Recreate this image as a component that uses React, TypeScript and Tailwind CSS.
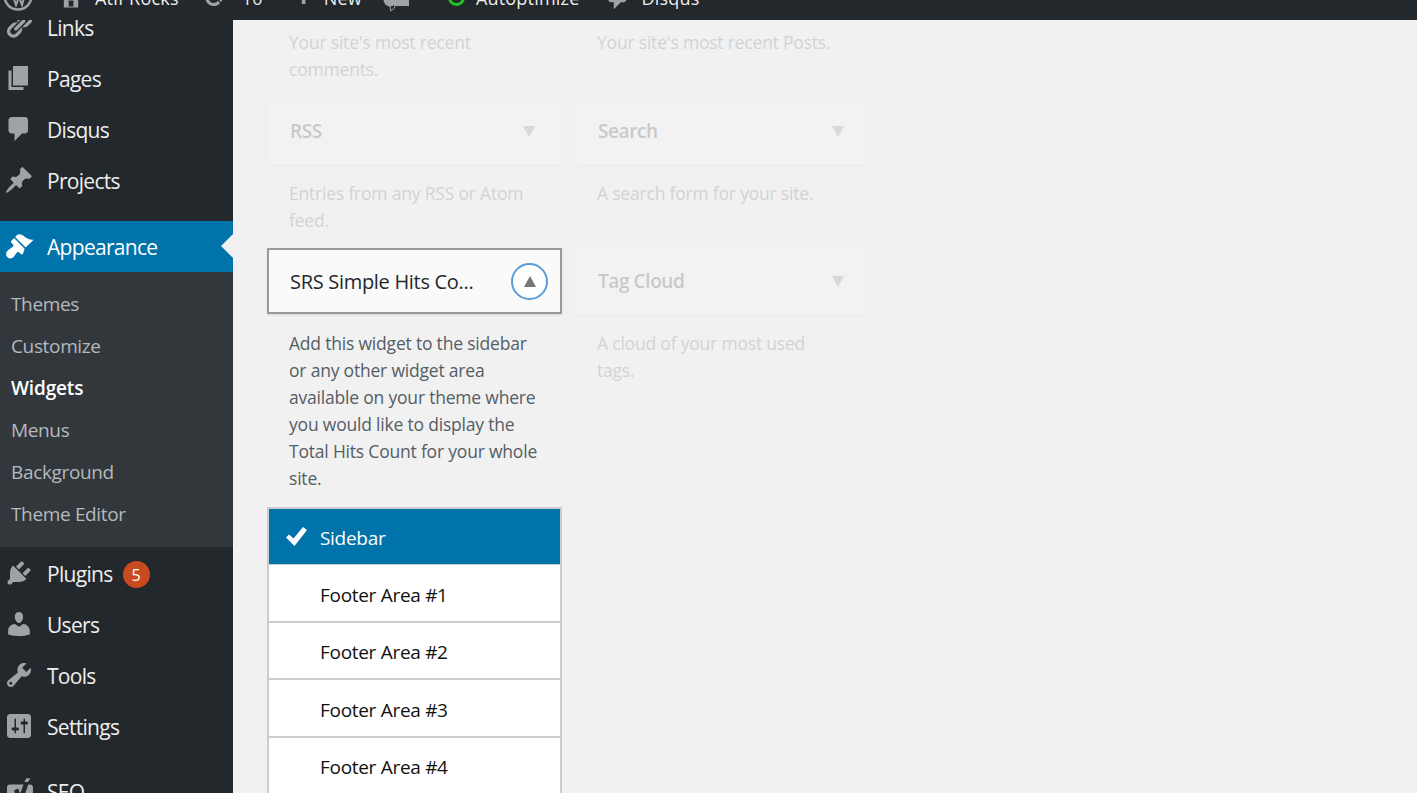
import React from "react";

const font = "font-['Open_Sans','Noto_Sans',sans-serif]";

const icons: any = {
  links:
    "M17.74 2.76c1.68 1.69 1.68 4.41 0 6.1l-1.53 1.52c-1.12 1.12-2.7 1.47-4.14 1.09l2.62-2.61.76-.77.76-.76c.84-.84.84-2.2 0-3.04-.84-.85-2.2-.85-3.04 0l-.77.76-3.38 3.38c-.37-1.44-.02-3.02 1.1-4.14l1.52-1.53c1.69-1.68 4.42-1.68 6.1 0zM8.59 13.43l5.34-5.34c.42-.42.42-1.1 0-1.52-.44-.43-1.13-.39-1.53 0l-5.33 5.34c-.42.42-.42 1.1 0 1.52.44.43 1.13.39 1.52 0zm-.76 2.29l4.14-4.15c.38 1.44.03 3.02-1.09 4.14l-1.52 1.53c-1.69 1.68-4.41 1.68-6.1 0-1.68-1.68-1.68-4.42 0-6.1l1.53-1.52c1.12-1.12 2.7-1.47 4.14-1.1l-4.14 4.15c-.85.84-.85 2.2 0 3.05.84.84 2.2.84 3.04 0z",
  pages: "M6 15V2h10v13H6zm-1 1h8v2H3V5h2v11z",
  comments:
    "M5 2h9c1.1 0 2 .9 2 2v7c0 1.1-.9 2-2 2h-2l-5 5v-5H5c-1.1 0-2-.9-2-2V4c0-1.1.9-2 2-2z",
  pin: "M10.44 3.02l1.82-1.82 6.36 6.35-1.83 1.82c-1.05-.68-2.48-.57-3.41.36l-.75.75c-.92.93-1.04 2.35-.35 3.41l-1.83 1.82-2.41-2.41-2.8 2.79c-.42.42-3.38 2.71-3.8 2.29s1.86-3.39 2.28-3.81l2.79-2.79L4.1 9.36l1.83-1.82c1.05.69 2.48.57 3.4-.36l.75-.75c.93-.92 1.05-2.35.36-3.41z",
  brush:
    "M14.48 11.06L7.41 3.99l1.5-1.5c.5-.56 2.3-.47 3.51.32 1.21.8 1.43 1.28 2.91 2.1 1.18.64 2.45 1.26 4.45.85zm-.71.71L6.7 4.7 4.93 6.47c-.39.39-.39 1.02 0 1.41l1.06 1.06c.39.39.39 1.03 0 1.42-.6.6-1.43 1.11-2.21 1.69-.35.26-.7.53-1.01.84C1.43 13.71.96 15.65 2 17.18c1.04 1.53 3.15 1.41 4.19.37.31-.31.58-.66.84-1.01.58-.78 1.09-1.61 1.69-2.21.39-.39 1.03-.39 1.42 0l1.06 1.06c.39.39 1.02.39 1.41 0z",
  plugin:
    "M13.11 4.36L9.87 7.6 8 5.73l3.24-3.24c.35-.34 1.05-.2 1.56.32.52.51.66 1.21.31 1.55zm-8 1.77l.91-1.12 9.01 9.01-1.19.84c-.71.71-2.63 1.16-3.82 1.16H6.14L4.9 17.26c-.59.59-1.54.59-2.12 0-.59-.58-.59-1.53 0-2.12l1.24-1.24v-3.88c0-1.13.4-3.19 1.09-3.89zm7.26 3.97l3.24-3.24c.34-.35 1.04-.21 1.55.31.52.51.66 1.21.31 1.55l-3.24 3.25z",
  users:
    "M10 9.25c-2.27 0-2.73-3.44-2.73-3.44C7 4.02 7.82 2 9.97 2c2.16 0 2.98 2.02 2.71 3.81 0 0-.41 3.44-2.68 3.44zm0 2.57L12.72 10c2.39 0 4.52 2.33 4.52 4.53v2.49s-3.65 1.13-7.24 1.13c-3.65 0-7.24-1.13-7.24-1.13v-2.49c0-2.25 1.94-4.48 4.47-4.48z",
  tools:
    "M16.68 9.77c-1.34 1.34-3.3 1.67-4.95.99l-5.41 6.52c-.99.99-2.59.99-3.58 0s-.99-2.59 0-3.57l6.52-5.42c-.68-1.65-.35-3.61.99-4.95 1.28-1.28 3.12-1.62 4.72-1.06l-2.89 2.89 2.82 2.82 2.86-2.87c.53 1.58.18 3.39-1.08 4.65zM3.81 16.21c.4.39 1.04.39 1.43 0 .4-.4.4-1.04 0-1.43-.39-.4-1.03-.4-1.43 0-.39.39-.39 1.03 0 1.43z",
  settings:
    "M18 16V4c0-1.1-.9-2-2-2H4c-1.1 0-2 .9-2 2v12c0 1.1.9 2 2 2h12c1.1 0 2-.9 2-2zM8 11h1c.55 0 1 .45 1 1s-.45 1-1 1H8v1.5c0 .28-.22.5-.5.5s-.5-.22-.5-.5V13H6c-.55 0-1-.45-1-1s.45-1 1-1h1V5.5c0-.28.22-.5.5-.5s.5.22.5.5V11zm5-2h-1c-.55 0-1-.45-1-1s.45-1 1-1h1V5.5c0-.28.22-.5.5-.5s.5.22.5.5V7h1c.55 0 1 .45 1 1s-.45 1-1 1h-1v5.5c0 .28-.22.5-.5.5s-.5-.22-.5-.5V9z",
  home: "M16 8.5l1.53 1.53-1.06 1.06L10 4.62l-6.47 6.47-1.06-1.06L10 2.5l4 4v-2h2v4zm-6-2.46l6 5.99V18H4v-5.97zM12 17v-5H8v5h4z",
  refresh:
    "M10.2 3.28c3.53 0 6.43 2.61 6.92 6h2.08l-3.5 4-3.5-4h2.32c-.45-1.97-2.21-3.45-4.32-3.45-1.45 0-2.73.71-3.54 1.78L4.95 5.66C6.23 4.2 8.11 3.28 10.2 3.28zm-.4 13.44c-3.52 0-6.43-2.61-6.92-6H.8l3.5-4c1.17 1.33 2.33 2.67 3.5 4H5.48c.45 1.97 2.21 3.45 4.32 3.45 1.45 0 2.73-.71 3.54-1.78l1.71 1.95c-1.28 1.46-3.15 2.38-5.25 2.38z",
  plus: "M17 7v3h-5v5H9v-5H4V7h5V2h3v5h5z",
};

const Icon = ({ d, className }: any) => (
  <svg viewBox="0 0 20 20" className={className} fill="currentColor">
    <path d={d} />
  </svg>
);

const SeoIcon = () => (
  <svg viewBox="0 0 20 20" className="mb-[4px] h-[30px] w-[30px] shrink-0 text-[#9ea3a8]" fill="currentColor">
    <rect x="2" y="5.7" width="17.3" height="14" rx="2" />
    <path d="M8 9l3 7 4.5-13" fill="none" stroke="#23282d" strokeWidth="3" />
    <path d="M13.5 4L15 1.5h2.5L16 4z" />
  </svg>
);

const MenuItem = ({ icon, label, badge }: any) => (
  <div className="flex h-[51px] items-center pl-[4px] text-[21px] text-[#eee]">
    {icon === "seo" ? (
      <SeoIcon />
    ) : (
      <Icon
        d={icons[icon]}
        className={
          icon === "links"
            ? "mb-[7px] h-[30px] w-[30px] shrink-0 text-[#9ea3a8]"
            : "mb-[4px] h-[30px] w-[30px] shrink-0 text-[#9ea3a8]"
        }
      />
    )}
    <span className="ml-[13px] tracking-[-0.7px]">{label}</span>
    {badge && (
      <span className="ml-[10px] flex h-[27px] w-[27px] items-center justify-center rounded-full bg-[#ca4a1f] text-[16px] text-white">
        {badge}
      </span>
    )}
  </div>
);

const subItems = ["Themes", "Customize", "Widgets", "Menus", "Background", "Theme Editor"];

const Sidebar = () => (
  <aside className="w-[233px] shrink-0 bg-[#23282d]">
    <div className="-mt-[17px]">
      <MenuItem icon="links" label="Links" />
      <MenuItem icon="pages" label="Pages" />
      <MenuItem icon="comments" label="Disqus" />
      <MenuItem icon="pin" label="Projects" />
    </div>
    <div className="relative mt-[14px] flex h-[51px] items-center bg-[#0073aa] pl-[4px] text-[21px] text-white">
      <Icon d={icons.brush} className="mb-[2px] h-[30px] w-[30px] shrink-0" />
      <span className="ml-[13px] mt-[2px] tracking-[-0.7px]">Appearance</span>
      <div className="absolute right-0 top-[13px] h-0 w-0 border-y-[12px] border-r-[12px] border-y-transparent border-r-[#f1f1f1]" />
    </div>
    <div className="bg-[#32373c] pb-[12px] pl-[11px] pt-[11px] text-[19px] text-[#b4b9be]">
      {subItems.map((s) => (
        <div
          key={s}
          className={
            s === "Widgets"
              ? "flex h-[42px] items-center font-semibold tracking-[-0.15px] text-white"
              : "flex h-[42px] items-center tracking-[-0.35px]"
          }
        >
          {s}
        </div>
      ))}
    </div>
    <div className="mt-[2px]">
      <MenuItem icon="plugin" label="Plugins" badge="5" />
      <MenuItem icon="users" label="Users" />
      <MenuItem icon="tools" label="Tools" />
      <MenuItem icon="settings" label="Settings" />
    </div>
    <div className="mt-[14px]">
      <MenuItem icon="seo" label="SEO" />
    </div>
  </aside>
);

const TopBar = () => (
  <div className="relative z-10 h-[20px] shrink-0 overflow-hidden bg-[#23282d]">
    <div className="-mt-[22px] flex h-[40px] items-center pl-[3px] text-[18px] tracking-[0.2px] text-[#eee]">
      <svg viewBox="0 0 30 30" className="mb-[4px] h-[30px] w-[30px] text-[#9ea3a8]" fill="none" stroke="currentColor" strokeWidth="2.5">
        <circle cx="15" cy="15" r="13.5" />
        <path d="M8 9l5 15 3-8 3 8 4-15" strokeWidth="2" />
      </svg>
      <Icon d={icons.home} className="ml-[26px] h-[24px] w-[24px] text-[#9ea3a8]" />
      <span className="ml-[12px]">Atif Rocks</span>
      <Icon d={icons.refresh} className="ml-[23px] h-[24px] w-[24px] text-[#9ea3a8]" />
      <span className="ml-[16px]">10</span>
      <Icon d={icons.plus} className="ml-[28px] h-[24px] w-[24px] text-[#9ea3a8]" />
      <span className="ml-[9px]">New</span>
      <svg viewBox="0 0 28 28" className="ml-[21px] h-[28px] w-[28px] text-[#9ea3a8]" fill="currentColor">
        <circle cx="7" cy="16" r="6.5" />
        <rect x="11" y="8" width="15" height="14" />
        <path d="M7 21l0.5 6q4-1.5 5-6" fill="none" stroke="currentColor" strokeWidth="1" />
      </svg>
      <div className="ml-[37px] mb-[2px] h-[17px] w-[17px] rounded-full border-[3px] border-[#22c322]" />
      <span className="ml-[11px]">Autoptimize</span>
      <Icon d={icons.comments} className="ml-[25px] h-[28px] w-[28px] text-[#9ea3a8]" />
      <span className="ml-[9px]">Disqus</span>
    </div>
  </div>
);

const Caret = ({ up }: any) => (
  <div
    className={
      up
        ? "h-0 w-0 border-x-[6.5px] border-b-[11px] border-x-transparent border-b-[#72777c]"
        : "h-0 w-0 border-x-[6.5px] border-t-[11px] border-x-transparent border-t-[#72777c]"
    }
  />
);

const FadedBox = ({ title, second }: any) => (
  <div
    className={
      second
        ? "flex h-[66px] items-center justify-between bg-[#fafafa] pl-[22px] pr-[27px] shadow-[0_1px_2px_rgba(0,0,0,0.1)]"
        : "flex h-[66px] items-center justify-between bg-[#fafafa] pl-[23px] pr-[27px] shadow-[0_1px_2px_rgba(0,0,0,0.1)]"
    }
  >
    <span className="pt-[1px] text-[19px] font-semibold tracking-[-0.4px] text-[#23282d]">{title}</span>
    <Caret />
  </div>
);

const Faded = ({ children }: any) => <div className="opacity-20">{children}</div>;

const desc = "pt-[1px] text-[17.5px] leading-[27px] tracking-[-0.2px] text-[#555d66]";

const rows = ["Footer Area #1", "Footer Area #2", "Footer Area #3", "Footer Area #4"];

const Main = () => (
  <main className="flex-1 overflow-hidden bg-[#f1f1f1] pl-[34px] pt-[8px]">
    <div className="grid w-[603px] grid-cols-[295px_295px] gap-x-[14px]">
      <div>
        <Faded>
          <p className={`${desc} h-[54px] pl-[22px]`}>
            Your site's most recent
            <br />
            comments.
          </p>
          <div className="mt-[16px]">
            <FadedBox title="RSS" />
          </div>
          <p className={`${desc} mt-[15px] h-[54px] pl-[22px]`}>
            Entries from any RSS or Atom
            <br />
            feed.
          </p>
        </Faded>

        <div className="mt-[15px] flex h-[66px] items-center justify-between border-2 border-[#999] bg-[#fafafa] pl-[21px] pr-[12px] shadow-[0_1px_2px_rgba(0,0,0,0.1)]">
          <span className="pt-[2px] text-[20px] font-medium tracking-[-0.3px] text-[#23282d]">SRS Simple Hits Co...</span>
          <div className="flex h-[37px] w-[37px] items-center justify-center rounded-full border-2 border-[#5b9dd9] bg-white">
            <Caret up />
          </div>
        </div>
        <p className={`${desc} mt-[15px] pl-[22px]`}>
          Add this widget to the sidebar
          <br />
          or any other widget area
          <br />
          available on your theme where
          <br />
          you would like to display the
          <br />
          Total Hits Count for your whole
          <br />
          site.
        </p>

        <div className="mt-[15px] border-2 border-[#ccc] bg-white text-[19px] tracking-[-0.3px]">
          <div className="flex h-[56px] items-center border-b border-[#ccc] bg-[#0073aa] pt-[4px] text-white">
            <svg viewBox="0 0 21 19" className="-mt-[4px] ml-[17px] h-[19px] w-[21px]" fill="currentColor">
              <path d="M0 10.5L3 7.5 7.5 11.5 17 0 21 3 8.5 19z" />
            </svg>
            <span className="ml-[13px]">Sidebar</span>
          </div>
          {rows.map((r) => (
            <div key={r} className="flex h-[57.5px] items-center border-b-2 border-[#ccc] pl-[51px] pt-[4px] text-[#111]">
              {r}
            </div>
          ))}
        </div>
      </div>

      <Faded>
        <p className={`${desc} h-[54px] pl-[21px]`}>Your site's most recent Posts.</p>
        <div className="mt-[16px]">
          <FadedBox title="Search" second />
        </div>
        <p className={`${desc} mt-[15px] h-[54px] pl-[21px]`}>A search form for your site.</p>
        <div className="mt-[15px]">
          <FadedBox title="Tag Cloud" second />
        </div>
        <p className={`${desc} mt-[15px] pl-[21px]`}>
          A cloud of your most used
          <br />
          tags.
        </p>
      </Faded>
    </div>
  </main>
);

const App = () => {
  return (
    <div className={`flex h-[793px] w-[1417px] flex-col overflow-hidden ${font}`}>
      <TopBar />
      <div className="relative flex min-h-0 flex-1">
        <Sidebar />
        <Main />
      </div>
    </div>
  );
};

export default App;
